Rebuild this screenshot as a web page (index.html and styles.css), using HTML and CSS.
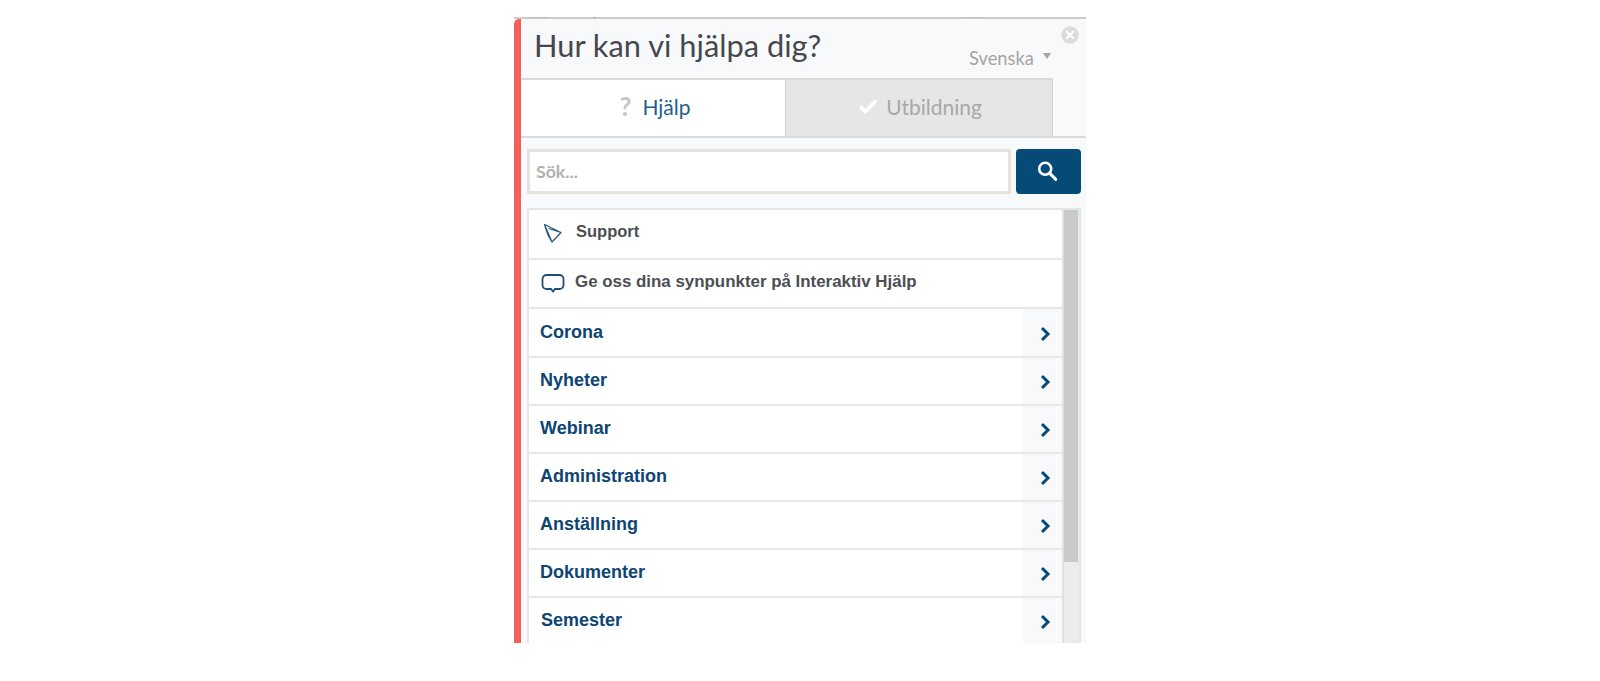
FILE: index.html
```html
<!DOCTYPE html>
<html lang="sv">
<head>
<meta charset="utf-8">
<title>Hur kan vi hjälpa dig?</title>
<link rel="stylesheet" href="styles.css">
</head>
<body>
<div class="topline"><span class="tick tick-a"></span><span class="tick tick-b"></span><span class="tick tick-c"></span></div>
<div class="panel">
  <div class="accent"></div>
  <div class="main">
    <header class="head">
      <h1 class="title">Hur kan vi hjälpa dig?</h1>
      <div class="lang">Svenska <span class="caret"></span></div>
      <svg class="close" width="18" height="18" viewBox="0 0 19 19" aria-hidden="true"><circle cx="9.5" cy="9.5" r="9.2" fill="#dcdcdc"/><path d="M6 6l7 7M13 6l-7 7" stroke="#fff" stroke-width="2.2" stroke-linecap="round"/></svg>
    </header>
    <nav class="tabs">
      <div class="tab tab-on"><span class="qmark">?</span><span>Hjälp</span></div>
      <div class="tab tab-off">
        <svg class="check" width="20" height="16" viewBox="0 0 20 16" aria-hidden="true"><path d="M2 8.500l5.500 5L18 2.500" fill="none" stroke="#fff" stroke-width="3.600"/></svg>
        <span>Utbildning</span>
      </div>
    </nav>
    <div class="search">
      <div class="input">Sök...</div>
      <div class="btn">
        <svg class="btn-ic" width="22" height="22" viewBox="0 0 22 22" aria-hidden="true"><circle cx="8.200" cy="7.800" r="6" fill="none" stroke="#fff" stroke-width="2.600"/><path d="M12.800 12.400l6 6" stroke="#fff" stroke-width="3" stroke-linecap="round"/></svg>
      </div>
    </div>
    <div class="listbox">
      <ul class="list">
        <li class="row link">
          <svg class="ic" width="20" height="20" viewBox="0 0 20 20" aria-hidden="true"><path d="M1.500 1.500L18 9.500 9 19 5 12zM1.500 1.500L9 19M5.500 5.500L18 9.500" fill="none" stroke="#2d5a80" stroke-width="1.300" stroke-linejoin="round"/></svg>
          <span class="link-text">Support</span>
        </li>
        <li class="row link">
          <svg class="ic ic-chat" width="24" height="20" viewBox="0 0 24 20" aria-hidden="true"><path d="M5.500 2h13a4 4 0 0 1 4 4v6a4 4 0 0 1-4 4h-4.500l-2 2.500-2-2.500H5.500a4 4 0 0 1-4-4V6a4 4 0 0 1 4-4z" fill="none" stroke="#1f4f78" stroke-width="1.800"/></svg>
          <span class="link-text">Ge oss dina synpunkter på Interaktiv Hjälp</span>
        </li>
        <li class="row cat"><span class="cat-text">Corona</span><span class="more"><svg width="13" height="16" viewBox="0 0 13 16"><path d="M3 2l6 6-6 6" fill="none" stroke="#064a7a" stroke-width="3"/></svg></span></li>
        <li class="row cat"><span class="cat-text">Nyheter</span><span class="more"><svg width="13" height="16" viewBox="0 0 13 16"><path d="M3 2l6 6-6 6" fill="none" stroke="#064a7a" stroke-width="3"/></svg></span></li>
        <li class="row cat"><span class="cat-text">Webinar</span><span class="more"><svg width="13" height="16" viewBox="0 0 13 16"><path d="M3 2l6 6-6 6" fill="none" stroke="#064a7a" stroke-width="3"/></svg></span></li>
        <li class="row cat"><span class="cat-text">Administration</span><span class="more"><svg width="13" height="16" viewBox="0 0 13 16"><path d="M3 2l6 6-6 6" fill="none" stroke="#064a7a" stroke-width="3"/></svg></span></li>
        <li class="row cat"><span class="cat-text">Anställning</span><span class="more"><svg width="13" height="16" viewBox="0 0 13 16"><path d="M3 2l6 6-6 6" fill="none" stroke="#064a7a" stroke-width="3"/></svg></span></li>
        <li class="row cat"><span class="cat-text">Dokumenter</span><span class="more"><svg width="13" height="16" viewBox="0 0 13 16"><path d="M3 2l6 6-6 6" fill="none" stroke="#064a7a" stroke-width="3"/></svg></span></li>
        <li class="row cat"><span class="cat-text">Semester</span><span class="more"><svg width="13" height="16" viewBox="0 0 13 16"><path d="M3 2l6 6-6 6" fill="none" stroke="#064a7a" stroke-width="3"/></svg></span></li>
      </ul>
      <div class="scroll"><div class="thumb"></div></div>
    </div>
  </div>
</div>
</body>
</html>
```
FILE: styles.css
```css
html, body { margin: 0; padding: 0; background: #fff; height: 100%; overflow: hidden; }
body { font-family: "Lato", sans-serif; padding: 17px 0 0 514px; box-sizing: border-box; }
.topline { width: 572px; height: 2px; background: #cbcbcb; position: relative; }
.tick { position: absolute; top: 0; height: 1px; background: #bcbcbc; }
.tick-a { left: 16px; width: 18px; }
.tick-b { left: 80px; width: 1px; background: #7d8a96; }
.tick-c { left: 448px; width: 21px; background: #c2c2c2; }
.panel { width: 572px; height: 624px; display: flex; overflow: hidden; background: #f8f9fb; }
.accent { width: 7px; flex: none; background: #f2605a; border-top-left-radius: 5px; }
.main { flex: 1; min-width: 0; display: flex; flex-direction: column; }
.head { height: 59px; flex: none; position: relative; box-sizing: border-box; }
.title { margin: 0; padding: 6px 0 0 13px; font: 400 30.8px/42px "Lato", sans-serif; color: #44484d; }
.lang { position: absolute; left: 448px; top: 27px; font-size: 18.3px; line-height: 24px; color: #a4a4a4; display: flex; align-items: center; gap: 9px; }
.caret { width: 0; height: 0; border-left: 4px solid transparent; border-right: 4px solid transparent; border-top: 6px solid #a4a4a4; margin-top: -5px; }
.close { position: absolute; left: 540px; top: 7px; }
.tabs { height: 60px; flex: none; display: flex; border-bottom: 2px solid #dadada; box-sizing: border-box; }
.tab { display: flex; align-items: center; justify-content: center; font-size: 21px; box-sizing: border-box; border-top: 2px solid #d9d9d9; padding-bottom: 4px; }
.tab-on { width: 264px; background: #fff; color: #1f5f8b; gap: 11px; padding-left: 4px; }
.tab-off { width: 268px; background: #e6e6e6; color: #a8a8a8; gap: 8px; padding-left: 2px; border-left: 1px solid #d2d2d2; border-right: 1px solid #d2d2d2; }
.qmark { color: #c6c6c6; font-weight: 700; font-size: 26px; line-height: 26px; }
.search { display: flex; gap: 5px; padding: 11px 5px 0 6px; flex: none; }
.input { flex: 1; height: 45px; box-sizing: border-box; background: #fff; border: 3px solid #e6e3dc; padding: 0 6px; font-size: 17.7px; font-weight: 700; line-height: 40px; color: #b0b0b0; }
.btn { width: 65px; height: 45px; background: #064a78; border-radius: 4px; display: flex; align-items: center; justify-content: center; }
.btn-ic { margin-right: 2px; }
.listbox { margin: 14px 5px 0 6px; flex: 1; min-height: 0; display: flex; border: 2px solid #e6e6e6; border-bottom: 0; background: #fff; overflow: hidden; }
.list { list-style: none; margin: 0; padding: 0; flex: 1; min-width: 0; }
.row { display: flex; align-items: center; box-sizing: border-box; border-bottom: 2px solid #e8e8e8; font-family: "Liberation Sans", Arial, sans-serif; font-weight: 700; }
.link { height: 49px; padding-left: 11px; color: #4b4f54; font-size: 16.9px; padding-bottom: 4px; }
.link:first-child { height: 50px; padding-bottom: 5px; font-size: 16.5px; }
.ic { flex: none; width: 20px; margin-right: 13px; margin-left: 3px; margin-top: 3px; }
.ic-chat { width: 24px; margin-right: 10px; margin-left: 1px; margin-top: 2px; }
.cat { height: 48px; padding-left: 11px; color: #0d4573; font-size: 18px; justify-content: space-between; }
.link + .cat { height: 49px; }
.cat:last-child .cat-text { padding-left: 1px; }
.cat-text { padding-bottom: 1px; }
.more { width: 39px; align-self: stretch; background: #f8f9fb; display: flex; align-items: center; justify-content: center; padding: 2px 0 0 6px; box-sizing: border-box; }
.scroll { width: 17px; flex: none; background: #ececec; border-left: 2px solid #e0e0e0; box-sizing: border-box; padding: 0 1px 0 0; }
.thumb { height: 352px; background: #c9c9c9; }
```
